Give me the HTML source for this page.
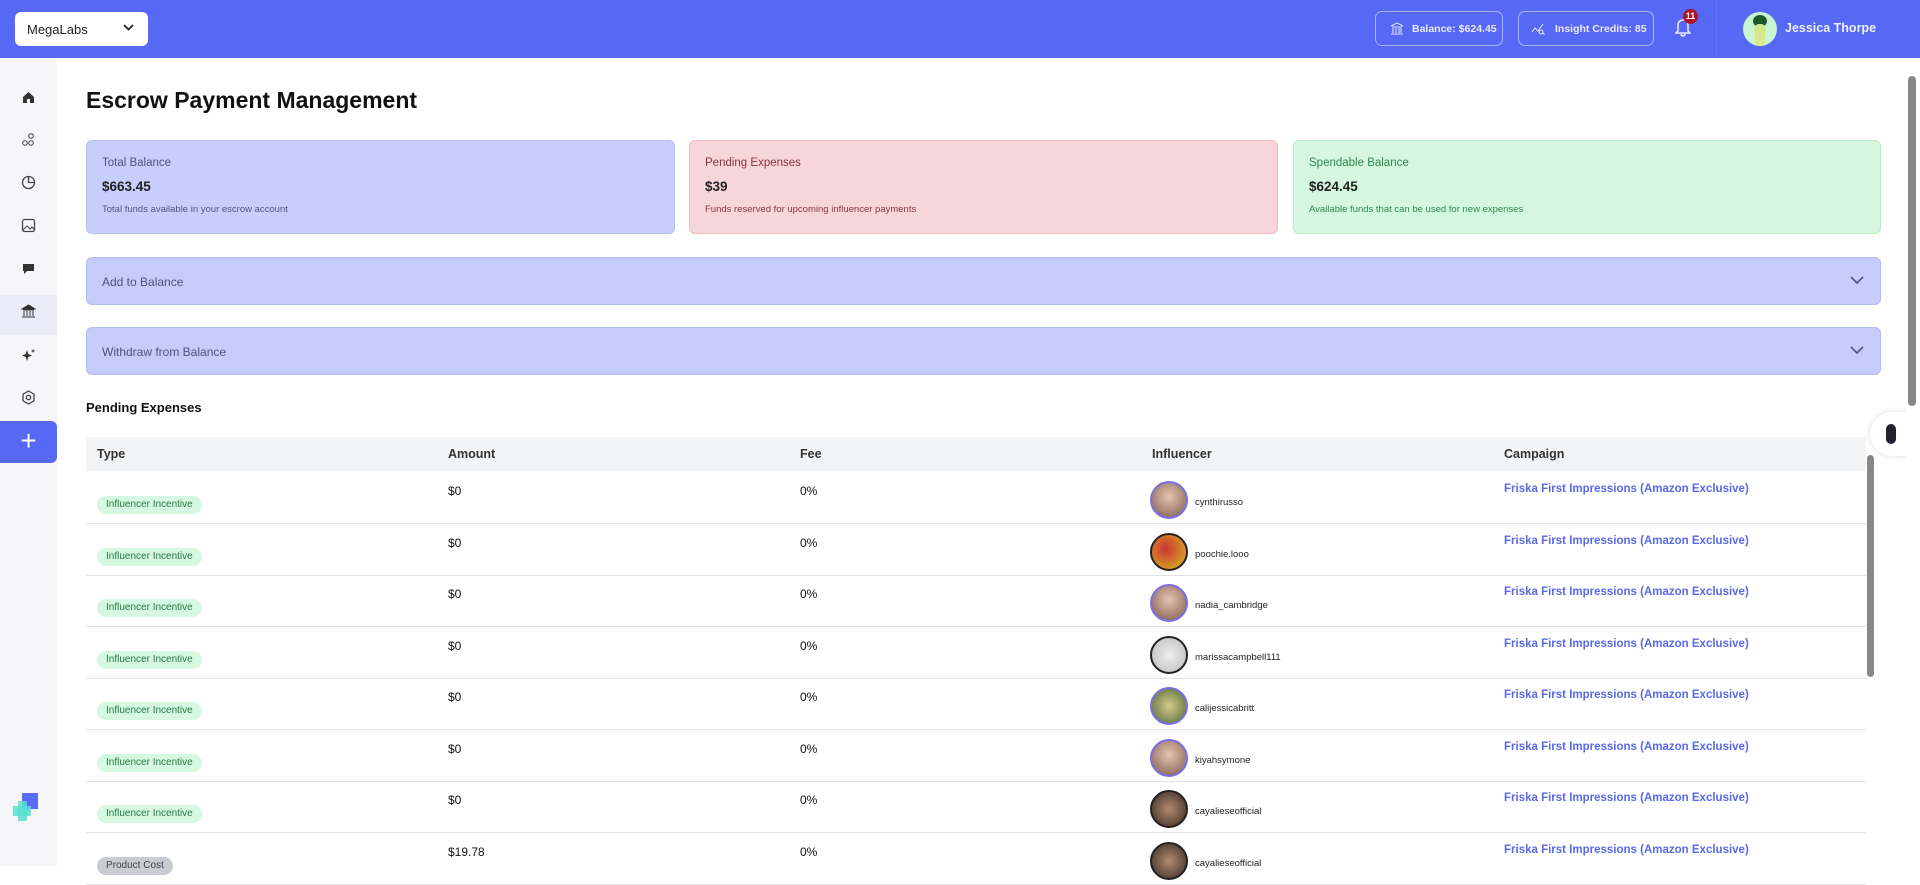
<!DOCTYPE html>
<html><head><style>
*{box-sizing:border-box;margin:0;padding:0}
body{width:1920px;height:866px;overflow:hidden;font-family:"Liberation Sans",sans-serif;background:#fff;position:relative;color:#111}
.hdr{position:absolute;left:0;top:0;width:1920px;height:58px;background:#5668f4}
.sel{position:absolute;left:15px;top:12px;width:133px;height:34px;background:#fff;border-radius:6px;font-size:13px;padding:10px 12px;color:#222}
.sel svg{position:absolute;right:14px;top:12px}
.hb{position:absolute;top:11px;height:35px;border:1px solid #a9b3fb;border-radius:7px;color:#e6e9ff;font-size:10.5px;font-weight:bold;padding:11px 0 0 36px}
.side{position:absolute;left:0;top:58px;width:57px;height:808px;background:#f6f6f9}
.si{position:absolute;left:21px;width:15px;height:15px}
.plus{position:absolute;left:0;width:57px;height:42px;background:#5668f4;border-radius:0 6px 6px 0;color:#fff;font-size:28px;text-align:center;line-height:40px}
h1{position:absolute;left:86px;top:87px;font-size:23px;font-weight:bold;color:#111}
.card{position:absolute;top:140px;height:94px;border-radius:6px;padding:16px 15px;font-size:11.5px}
.card b{display:block;font-size:13.5px;margin:10px 0 9px;color:#222}
.card small{font-size:9.5px}
.acc{position:absolute;left:86px;width:1795px;height:48px;background:#c5cbfb;border:1px solid #b4bcf7;border-radius:6px;font-size:12px;color:#4d5380;padding:17px 15px}
.acc svg{position:absolute;right:16px;top:18px}
.pe{position:absolute;left:86px;top:400px;font-size:13px;font-weight:bold}
.th{position:absolute;left:86px;top:437px;width:1780px;height:34px;background:#f3f4f6;font-size:12.5px;font-weight:bold;color:#333}
.th span,.r span{position:absolute}
.r{position:absolute;left:86px;width:1780px;height:52px;border-bottom:1px solid #e3e3e6;font-size:12px}
.tag{left:11px;top:24px;height:18px;padding:3px 9px;border-radius:9px;background:#d6f8e1;color:#247a44;font-size:10px}
.tag.g{background:#c9ccd2;color:#444}
.av{left:1064px;top:9px;width:38px;height:38px;border-radius:50%;border:2px solid #7b6ee8;background:radial-gradient(circle at 50% 40%,#e5c4b0,#7b5a4e)}
.av.t{border-color:#222}
.nm{left:1109px;top:25px;font-size:9.5px;color:#222}
.cp{left:1418px;top:11px;color:#5a69e6;font-weight:bold;font-size:11.5px}
</style></head><body>
<div class="hdr">
<div class="sel">MegaLabs<svg width="11" height="8" viewBox="0 0 11 8"><path d="M1 1l4.5 4.5L10 1" stroke="#222" stroke-width="1.8" fill="none"/></svg></div>
<div class="hb" style="left:1375px;width:128px"><svg style="position:absolute;left:14px;top:10px" width="14" height="13" viewBox="0 0 14 13"><path d="M1 4L7 1l6 3M2 5h10M3 6v5M6 6v5M9 6v5M11 6v5M1 12h12" stroke="#e6e9ff" fill="none"/></svg>Balance: $624.45</div>
<div class="hb" style="left:1518px;width:136px"><svg style="position:absolute;left:12px;top:10px" width="16" height="13" viewBox="0 0 16 13"><path d="M1 10l3-4 3 3 5-7M10 8a2 2 0 1 0 .1 0M11.5 10.5l2 2" stroke="#e6e9ff" fill="none"/></svg>Insight Credits: 85</div>
<svg style="position:absolute;left:1675px;top:17px" width="16" height="20" viewBox="0 0 16 20"><path d="M3 14V8a5 5 0 0 1 10 0v6l2 2H1zM6 17a2 2 0 0 0 4 0" stroke="#e6e9ff" stroke-width="1.6" fill="none"/></svg>
<div style="position:absolute;left:1683px;top:9px;width:15px;height:15px;border-radius:50%;background:#b0102a;color:#fff;font-size:9px;text-align:center;line-height:15px;font-weight:bold">11</div>
<div style="position:absolute;left:1716px;top:0;width:1px;height:58px;background:#6274f5"></div>
<div style="position:absolute;left:1743px;top:12px;width:34px;height:34px;border-radius:50%;background:#c8f5cf;overflow:hidden"><div style="position:absolute;left:10px;top:3px;width:14px;height:12px;border-radius:50%;background:#1d5a2a"></div><div style="position:absolute;left:12px;top:12px;width:10px;height:22px;background:#d8e98a;border-radius:4px"></div></div>
<div style="position:absolute;left:1785px;top:21px;color:#eef0ff;font-size:12.5px;font-weight:bold">Jessica Thorpe</div>
</div>
<div class="side">
<svg class="si" style="top:32px" viewBox="0 0 15 15"><path d="M2 7L7.5 2 13 7v6H9V9H6v4H2z" fill="#333"/></svg>
<svg class="si" style="top:74px" viewBox="0 0 15 15"><circle cx="10" cy="4" r="2.3" fill="none" stroke="#444"/><circle cx="4" cy="11" r="2.3" fill="none" stroke="#444"/><circle cx="10" cy="11" r="2.3" fill="none" stroke="#444"/></svg>
<svg class="si" style="top:117px" viewBox="0 0 15 15"><circle cx="7.5" cy="7.5" r="6" fill="none" stroke="#444" stroke-width="1.3"/><path d="M7.5 1.5v6h6" fill="none" stroke="#444" stroke-width="1.3"/></svg>
<svg class="si" style="top:160px" viewBox="0 0 15 15"><rect x="1.5" y="1.5" width="12" height="12" rx="2" fill="none" stroke="#444" stroke-width="1.3"/><path d="M2 12l4-4 3 3 2-2 3 3" fill="none" stroke="#444"/></svg>
<svg class="si" style="top:203px" viewBox="0 0 15 15"><path d="M2 3h11v7H6l-3 3v-3H2z" fill="#333"/></svg>
<div style="position:absolute;left:0;top:237px;width:57px;height:40px;background:#ebecf7"></div>
<svg class="si" style="top:246px" viewBox="0 0 15 15"><path d="M1 5L7.5 1 14 5zM2 6h11M3 7v5M6 7v5M9 7v5M12 7v5M1 13h13" stroke="#333" fill="#333"/></svg>
<svg class="si" style="top:290px" viewBox="0 0 15 15"><path d="M6 2l1.3 4L11 7.5 7.3 9 6 13 4.7 9 1 7.5 4.7 6zM12 1l.6 1.4L14 3l-1.4.6L12 5l-.6-1.4L10 3l1.4-.6z" fill="#333"/></svg>
<svg class="si" style="top:332px" viewBox="0 0 15 15"><path d="M7.5 1l5.5 3.2v6.6L7.5 14 2 10.8V4.2z" fill="none" stroke="#444" stroke-width="1.3"/><circle cx="7.5" cy="7.5" r="2.2" fill="none" stroke="#444" stroke-width="1.3"/></svg>
<div class="plus" style="top:363px">+</div>
<div style="position:absolute;left:22px;top:735px;width:16px;height:16px;background:#5a6bf5"></div>
<div style="position:absolute;left:13px;top:748px;width:18px;height:10px;background:#57e0d0;opacity:.85"></div>
<div style="position:absolute;left:18px;top:743px;width:9px;height:20px;background:#57e0d0;opacity:.85"></div>
</div>
<h1>Escrow Payment Management</h1>
<div class="card" style="left:86px;width:589px;background:#c8cefc;border:1px solid #b7bef7;color:#4e5483">Total Balance<b>$663.45</b><small>Total funds available in your escrow account</small></div>
<div class="card" style="left:689px;width:589px;background:#f7d6da;border:1px solid #eebcc3;color:#8c3342">Pending Expenses<b>$39</b><small>Funds reserved for upcoming influencer payments</small></div>
<div class="card" style="left:1293px;width:588px;background:#d4f7de;border:1px solid #b8ecc7;color:#2f8a50">Spendable Balance<b>$624.45</b><small>Available funds that can be used for new expenses</small></div>
<div class="acc" style="top:257px">Add to Balance<svg width="14" height="9" viewBox="0 0 14 9"><path d="M1 1l6 6 6-6" stroke="#4d5380" stroke-width="1.6" fill="none"/></svg></div>
<div class="acc" style="top:327px">Withdraw from Balance<svg width="14" height="9" viewBox="0 0 14 9"><path d="M1 1l6 6 6-6" stroke="#4d5380" stroke-width="1.6" fill="none"/></svg></div>
<div class="pe">Pending Expenses</div>
<div class="th"><span style="left:11px;top:10px">Type</span><span style="left:362px;top:10px">Amount</span><span style="left:714px;top:10px">Fee</span><span style="left:1066px;top:10px">Influencer</span><span style="left:1418px;top:10px">Campaign</span></div>
<div class="r" style="top:472px"><span class="tag">Influencer Incentive</span><span style="left:362px;top:12px">$0</span><span style="left:714px;top:12px">0%</span><span class="av"></span><span class="nm">cynthirusso</span><span class="cp">Friska First Impressions (Amazon Exclusive)</span></div>
<div class="r" style="top:524px"><span class="tag">Influencer Incentive</span><span style="left:362px;top:12px">$0</span><span style="left:714px;top:12px">0%</span><span class="av t" style="background:radial-gradient(circle at 40% 40%,#c33,#d8c020)"></span><span class="nm">poochie.looo</span><span class="cp">Friska First Impressions (Amazon Exclusive)</span></div>
<div class="r" style="top:575px"><span class="tag">Influencer Incentive</span><span style="left:362px;top:12px">$0</span><span style="left:714px;top:12px">0%</span><span class="av"></span><span class="nm">nadia_cambridge</span><span class="cp">Friska First Impressions (Amazon Exclusive)</span></div>
<div class="r" style="top:627px"><span class="tag">Influencer Incentive</span><span style="left:362px;top:12px">$0</span><span style="left:714px;top:12px">0%</span><span class="av t" style="background:radial-gradient(circle,#eee,#bbb)"></span><span class="nm">marissacampbell111</span><span class="cp">Friska First Impressions (Amazon Exclusive)</span></div>
<div class="r" style="top:678px"><span class="tag">Influencer Incentive</span><span style="left:362px;top:12px">$0</span><span style="left:714px;top:12px">0%</span><span class="av" style="background:radial-gradient(circle,#d6c98a,#4d6a3a)"></span><span class="nm">calijessicabritt</span><span class="cp">Friska First Impressions (Amazon Exclusive)</span></div>
<div class="r" style="top:730px"><span class="tag">Influencer Incentive</span><span style="left:362px;top:12px">$0</span><span style="left:714px;top:12px">0%</span><span class="av"></span><span class="nm">kiyahsymone</span><span class="cp">Friska First Impressions (Amazon Exclusive)</span></div>
<div class="r" style="top:781px"><span class="tag">Influencer Incentive</span><span style="left:362px;top:12px">$0</span><span style="left:714px;top:12px">0%</span><span class="av t" style="background:radial-gradient(circle,#b08a70,#3a2a22)"></span><span class="nm">cayalieseofficial</span><span class="cp">Friska First Impressions (Amazon Exclusive)</span></div>
<div class="r" style="top:833px"><span class="tag g">Product Cost</span><span style="left:362px;top:12px">$19.78</span><span style="left:714px;top:12px">0%</span><span class="av t" style="background:radial-gradient(circle,#b08a70,#3a2a22)"></span><span class="nm">cayalieseofficial</span><span class="cp">Friska First Impressions (Amazon Exclusive)</span></div>
<div style="position:absolute;left:1867px;top:455px;width:7px;height:222px;background:#888;border-radius:4px"></div>
<div style="position:absolute;left:1870px;top:412px;width:40px;height:44px;background:#fff;border-radius:22px 0 0 22px;box-shadow:0 0 6px rgba(0,0,0,.15)"><div style="position:absolute;left:16px;top:12px;width:10px;height:20px;background:#223;border-radius:5px"></div></div>
<div style="position:absolute;left:1906px;top:58px;width:14px;height:808px;background:#fff"></div>
<div style="position:absolute;left:1908px;top:76px;width:8px;height:330px;background:#888;border-radius:4px"></div>
</body></html>
